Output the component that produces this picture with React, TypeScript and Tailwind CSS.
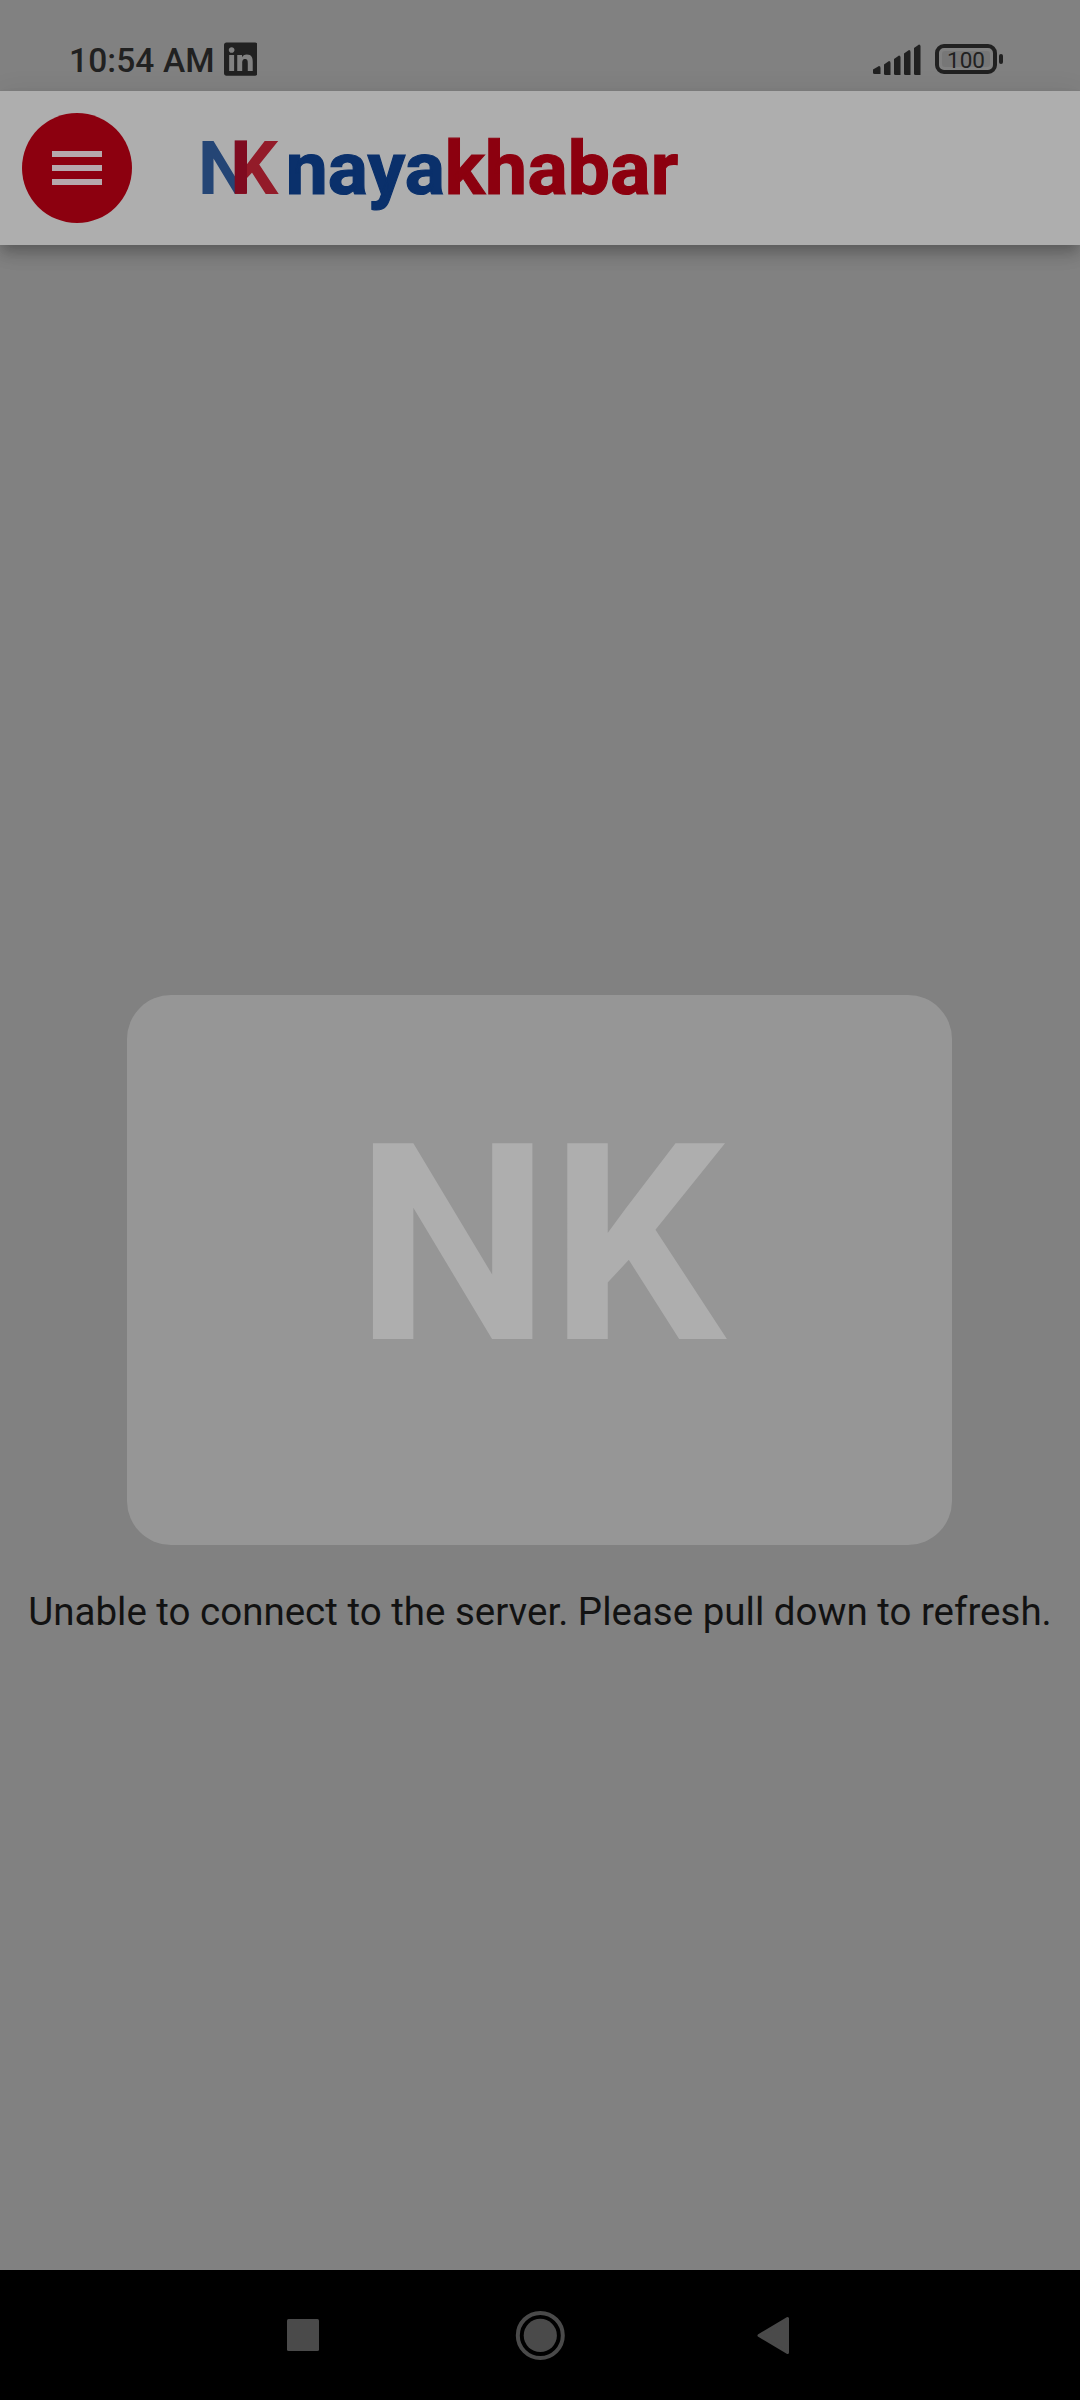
import { FaLinkedin } from "react-icons/fa";

const signalBars = [
  "M0 25.5 L6 22 Q7.5 22 7.5 24 V30 H1.5 Q0 30 0 28.5Z",
  "M11 20.5 L16 17 Q17.5 17 17.5 19 V31 H12.5 Q11 31 11 29.5Z",
  "M21 15 L26 11.5 Q27.5 11.5 27.5 13.5 V31 H22.5 Q21 31 21 29.5Z",
  "M31 9.5 L36 6 Q37.5 6 37.5 8 V31 H32.5 Q31 31 31 29.5Z",
  "M41 4 L46 0.5 Q47.5 0.5 47.5 2.5 V31 H42.5 Q41 31 41 29.5Z",
];

function StatusBar() {
  return (
    <div className="flex h-[91px] items-start justify-between pl-[69px] pr-[77px] text-[#212121]">
      <div className="flex pt-[41px]">
        <svg className="h-10 w-[154.5px]" viewBox="0 0 154.5 40">
          <text x="0" y="31" fontSize="33.5" fontWeight="500" fill="currentColor" textLength="145.5" lengthAdjust="spacing">
            10:54 AM
          </text>
        </svg>
        <FaLinkedin className="mt-[-1px] h-[38px] w-[33.5px]" preserveAspectRatio="none" />
      </div>
      <div className="flex pt-[44px]">
        <svg className="mr-[14px] h-8 w-12" viewBox="0 0 48 32" fill="currentColor">
          {signalBars.map((d) => (
            <path key={d} d={d} />
          ))}
        </svg>
        <div className="flex h-[30px] w-[62px] items-center justify-center rounded-[9px] border-4 border-[#212121]">
          <div className="flex h-4 w-12 items-center justify-center rounded-[3px] bg-[#777777] pt-[2px] text-[22.5px] leading-none">
            100
          </div>
        </div>
        <div className="ml-[2px] mt-[10px] h-[10px] w-1 rounded-[2px] bg-[#212121]" />
      </div>
    </div>
  );
}

function Header() {
  return (
    <header className="relative flex h-[154px] items-center bg-[#aeaeae] pl-[22px] shadow-[0_5.5px_11px_-2.75px_rgba(0,0,0,0.16),0_11px_14px_0_rgba(0,0,0,0.13),0_3px_27px_0_rgba(0,0,0,0.08)]">
      <button className="flex size-[110px] flex-col items-center justify-center gap-2 rounded-full bg-[#8c000f]" aria-label="Menu">
        <span className="h-[6px] w-[50px] bg-[#b6a8ac]" />
        <span className="h-[6px] w-[50px] bg-[#b6a8ac]" />
        <span className="h-[6px] w-[50px] bg-[#b6a8ac]" />
      </button>
      <svg className="ml-[58px] h-[120px] w-[510px]" viewBox="190 108 510 120" fontWeight="700" fontSize="75">
        <text x="197.7" y="193.7" fill="#244575">N</text>
        <text x="230.6" y="193.7" fill="#931b29">K</text>
        <rect x="234.7" y="140.4" width="12.3" height="53.3" fill="#7f0b20" />
        <text x="285.8" y="193.6" fill="#0a306b" stroke="#0a306b" strokeWidth="1.2">naya</text>
        <text x="444.7" y="193.6" fill="#8c000f" stroke="#8c000f" strokeWidth="1.2" textLength="233.5" lengthAdjust="spacing">khabar</text>
      </svg>
    </header>
  );
}

function NavigationBar() {
  return (
    <nav className="flex h-[130px] justify-center bg-black">
      <svg className="h-[130px] w-[560px]" viewBox="260 2270 560 130" fill="#4a4a4a">
        <rect x="287" y="2319" width="32" height="32" rx="1.5" />
        <circle cx="540.3" cy="2335.4" r="22.5" fill="none" stroke="#4a4a4a" strokeWidth="4" />
        <circle cx="540.3" cy="2335.4" r="16.6" />
        <path d="M759 2335.5 L787.5 2318.5 V2352.5Z" stroke="#4a4a4a" strokeWidth="3" strokeLinejoin="round" />
      </svg>
    </nav>
  );
}

export default function App() {
  return (
    <div className="flex h-[2400px] w-[1080px] flex-col overflow-hidden bg-[#818181] font-['Roboto',sans-serif]">
      <StatusBar />
      <Header />
      <main className="flex flex-1 flex-col items-center pt-[750px]">
        <div className="mr-px h-[550px] w-[825px] rounded-[44px] bg-[#969696]">
          <svg className="h-full w-full" viewBox="0 0 825 550">
            <text x="228.5" y="344" fontSize="275.5" fontWeight="700" fill="#aeaeae">NK</text>
          </svg>
        </div>
        <p className="mt-[44px] whitespace-nowrap text-[38.5px] leading-[45px] text-[#121212]">
          Unable to connect to the server. Please pull down to refresh.
        </p>
      </main>
      <NavigationBar />
    </div>
  );
}
